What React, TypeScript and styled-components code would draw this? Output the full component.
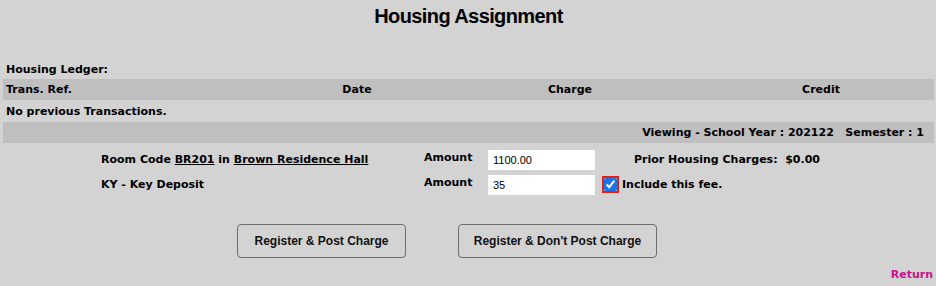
import React from "react";
import styled, { createGlobalStyle } from "styled-components";

const GlobalStyle = createGlobalStyle`
    html, body {
        margin: 0;
        padding: 0;
        background-color: #d3d3d3;
    }
    body {
        font-family: "DejaVu Sans", "Liberation Sans", sans-serif;
        color: #000;
    }
`;

const Page = styled.div`
    width: 936px;
    height: 286px;
    padding: 0 2px 0 3px;
    box-sizing: border-box;
    display: flex;
    flex-direction: column;
`;

const Title = styled.h1`
    margin: 0;
    padding-top: 5px;
    height: 48px;
    text-align: center;
    font-family: "Liberation Sans", Arial, sans-serif;
    font-size: 20px;
    font-weight: bold;
    letter-spacing: -0.6px;
    box-sizing: border-box;
`;

const SectionLabel = styled.div`
    height: 31px;
    padding: 13px 0 0 3px;
    box-sizing: border-box;
    font-size: 11px;
    font-weight: bold;
    line-height: 18px;
`;

const Row = styled.div<{ $band?: boolean; $tall?: boolean }>`
    display: grid;
    grid-template-columns: 279px 150px 276px 226px;
    align-items: center;
    height: ${(p) => (p.$tall ? 22 : 21)}px;
    background-color: ${(p) => (p.$band ? "#bfbfbf" : "transparent")};
    font-size: 11px;
    font-weight: bold;
`;

const Cell = styled.div<{ $align?: "left" | "center" | "right" }>`
    padding: 0 3px;
    text-align: ${(p) => p.$align ?? "center"};
`;

const FullCell = styled.div<{ $align?: "left" | "right" }>`
    grid-column: 1 / -1;
    padding: 0 10px 0 3px;
    text-align: ${(p) => p.$align ?? "left"};
`;

const Form = styled.div`
    display: grid;
    grid-template-columns: 323px 64px 114px 1fr;
    grid-auto-rows: 25px;
    padding: 4px 0 0 98px;
    font-size: 11px;
    font-weight: bold;
`;

const FieldLabel = styled.div`
    display: flex;
    align-items: center;
`;

const AmountLabel = styled.div`
    padding-top: 4px;
`;

const Linked = styled.span`
    text-decoration: underline;
`;

const AmountInput = styled.input`
    width: 107px;
    height: 20px;
    box-sizing: border-box;
    border: none;
    padding: 2px 5px;
    font-family: "Liberation Sans", Arial, sans-serif;
    font-size: 11px;
    background: #fff;
    color: #000;
    align-self: center;
`;

const Aside = styled.div<{ $indent?: number }>`
    display: flex;
    align-items: center;
    padding-left: ${(p) => p.$indent ?? 0}px;
    gap: 5px;
`;

const CheckBox = styled.input`
    width: 13px;
    height: 13px;
    margin: 0 0 0 2px;
    accent-color: #1a73e8;
    outline: 2px solid #e0201a;
    outline-offset: 0;
`;

const Buttons = styled.div`
    display: flex;
    gap: 52px;
    padding: 27px 0 0 234px;
`;

const ActionButton = styled.button<{ $width: number }>`
    width: ${(p) => p.$width}px;
    height: 34px;
    background: #d3d3d3;
    border: 1px solid #6e6e6e;
    border-radius: 4px;
    font-family: "Liberation Sans", Arial, sans-serif;
    font-size: 12px;
    font-weight: bold;
    color: #111;
    cursor: pointer;
`;

const Footer = styled.div`
    display: flex;
    justify-content: flex-end;
    padding: 10px 1px 0 0;
`;

const ReturnLink = styled.a`
    color: #c8148c;
    font-size: 11px;
    font-weight: bold;
    text-decoration: none;
    cursor: pointer;
`;

const App: React.FC = () => {
    return (
        <Page>
            <GlobalStyle />
            <Title>Housing Assignment</Title>
            <SectionLabel>Housing Ledger:</SectionLabel>
            <Row $band>
                <Cell $align="left">Trans. Ref.</Cell>
                <Cell>Date</Cell>
                <Cell>Charge</Cell>
                <Cell>Credit</Cell>
            </Row>
            <Row $tall>
                <FullCell>No previous Transactions.</FullCell>
            </Row>
            <Row $band>
                <FullCell $align="right">
                    Viewing - School Year : 202122&nbsp;&nbsp;&nbsp;Semester : 1
                </FullCell>
            </Row>
            <Form>
                <FieldLabel>
                    <span>
                        Room Code <Linked>BR201</Linked> in <Linked>Brown Residence Hall</Linked>
                    </span>
                </FieldLabel>
                <AmountLabel>Amount</AmountLabel>
                <AmountInput defaultValue="1100.00" />
                <Aside $indent={32}>Prior Housing Charges:&nbsp;&nbsp;$0.00</Aside>

                <FieldLabel>KY - Key Deposit</FieldLabel>
                <AmountLabel>Amount</AmountLabel>
                <AmountInput defaultValue="35" />
                <Aside>
                    <CheckBox type="checkbox" defaultChecked />
                    <span>Include this fee.</span>
                </Aside>
            </Form>
            <Buttons>
                <ActionButton $width={169}>Register &amp; Post Charge</ActionButton>
                <ActionButton $width={199}>Register &amp; Don't Post Charge</ActionButton>
            </Buttons>
            <Footer>
                <ReturnLink>Return</ReturnLink>
            </Footer>
        </Page>
    );
};

export default App;
